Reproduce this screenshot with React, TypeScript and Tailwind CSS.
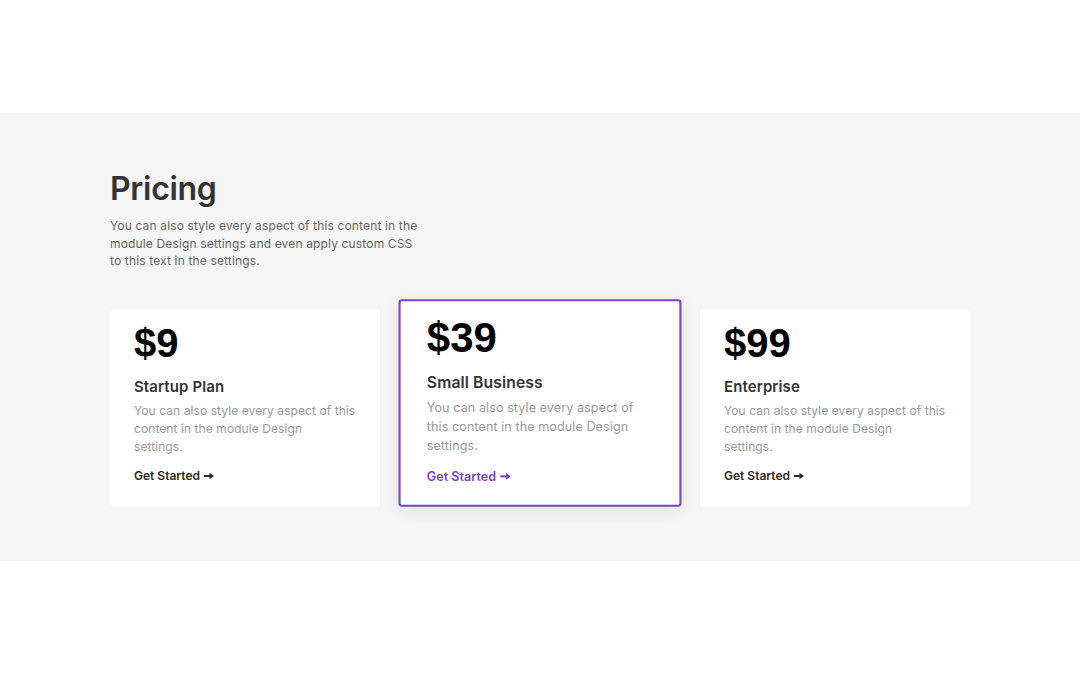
const plans = [
  { price: "$9", name: "Startup Plan", featured: false },
  { price: "$39", name: "Small Business", featured: true },
  { price: "$99", name: "Enterprise", featured: false },
];

export default function App() {
  return (
    <div className="min-h-[675px] w-[1080px] bg-white font-['Inter',sans-serif]">
      <div className="h-[113px]" />
      <section className="h-[448px] bg-[#f5f5f5] pl-[110px] pt-[56px]">
        <h1 className="text-[32px] font-semibold leading-[40px] tracking-[-0.3px] text-[#333]">
          Pricing
        </h1>
        <p className="mt-[8px] text-[12px] leading-[17.5px] tracking-[0.15px] text-[#666]">
          You can also style every aspect of this content in the
          <br />
          module Design settings and even apply custom CSS
          <br />
          to this text in the settings.
        </p>

        <div className="mt-[39px] flex gap-[25px]">
          {plans.map((plan) => (
            <PlanCard key={plan.name} {...plan} />
          ))}
        </div>
      </section>
    </div>
  );
}

function PlanCard({
  price,
  name,
  featured,
}: {
  price: string;
  name: string;
  featured: boolean;
}) {
  return (
    <div
      className={`h-[198px] w-[270px] rounded-[3px] bg-white px-[24px] pt-[14px] ${
        featured
          ? "-translate-y-[5px] scale-[1.048] border-2 border-[#8240d0] px-[25px] pt-[12px] shadow-[0_4px_14px_rgba(0,0,0,0.08)]"
          : ""
      }`}
    >
      <p className="font-['Liberation_Sans',Arial,sans-serif] text-[40px] font-bold leading-[40px] text-black">
        {price}
      </p>
      <p className="mt-[14px] text-[15px] font-semibold leading-[20px] tracking-[0.1px] text-[#333]">
        {name}
      </p>
      <p className="mt-[5px] text-[12px] leading-[18px] tracking-[0.08px] text-[#9a9a9a]">
        {featured ? (
          <>
            You can also style every aspect of
            <br />
            this content in the module Design
          </>
        ) : (
          <>
            You can also style every aspect of this
            <br />
            content in the module Design
          </>
        )}
        <br />
        settings.
      </p>
      <a
        href="#"
        className={`mt-[11px] flex items-center gap-[4px] text-[12px] font-semibold leading-[18px] ${
          featured ? "text-[#7b3fc6]" : "text-[#2a2a2a]"
        }`}
      >
        Get Started
        <svg width="10" height="8" viewBox="0 0 10 8" fill="currentColor">
          <rect x="0" y="3" width="6" height="2" />
          <path d="M5.5 0.8 L10 4 L5.5 7.2 Z" />
        </svg>
      </a>
    </div>
  );
}
